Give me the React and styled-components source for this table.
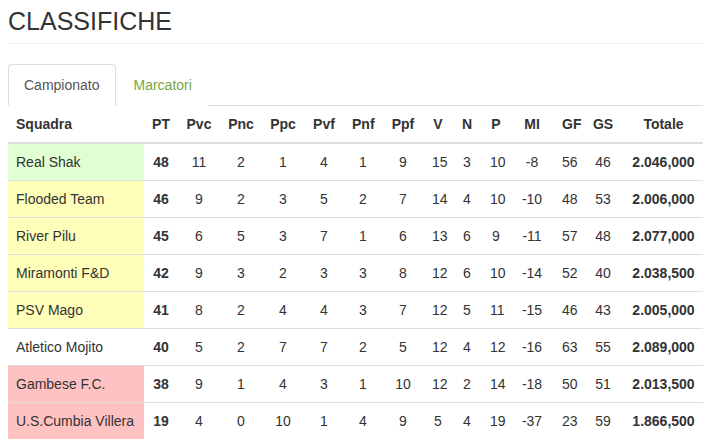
import styled, { createGlobalStyle } from 'styled-components';

const GlobalStyle = createGlobalStyle`
    body {
        margin: 0;
        padding: 0 8px;
        font-family: "Liberation Sans", Arial, sans-serif;
        font-size: 14px;
        line-height: 1.42857;
        color: #333;
        background: #fff;
    }
`;

const Page = styled.div`
    width: 695px;
`;

const Title = styled.h1`
    margin: 0;
    padding-top: 7px;
    font-size: 25px;
    font-weight: 400;
    line-height: 28px;
    color: #333;
    padding-bottom: 8px;
    border-bottom: 1px solid #eee;
`;

const Tabs = styled.ul`
    list-style: none;
    margin: 20px 0 0;
    padding: 0;
    display: flex;
    border-bottom: 1px solid #ddd;
`;

const Tab = styled.li`
    margin-right: 2px;
    margin-bottom: -1px;
    padding: 10px 15px;
    line-height: 20px;
    border: 1px solid ${({ $active }) => ($active ? '#ddd' : 'transparent')};
    border-bottom-color: ${({ $active }) => ($active ? '#fff' : 'transparent')};
    border-radius: 4px 4px 0 0;
    background: #fff;
    color: ${({ $active }) => ($active ? '#555' : '#7aa63e')};
    cursor: pointer;
`;

const Table = styled.table`
    width: 100%;
    border-collapse: collapse;
    border-spacing: 0;
    table-layout: fixed;
`;

const Th = styled.th`
    padding: 8px;
    line-height: 20px;
    font-weight: 700;
    text-align: ${({ $left }) => ($left ? 'left' : 'center')};
    border-bottom: 2px solid #ddd;
    white-space: nowrap;
`;

const Td = styled.td`
    padding: 8px;
    line-height: 20px;
    text-align: ${({ $left }) => ($left ? 'left' : 'center')};
    font-weight: ${({ $bold }) => ($bold ? 700 : 400)};
    border-top: ${({ $first }) => ($first ? 'none' : '1px solid #ddd')};
    background: ${({ $bg }) => $bg || 'transparent'};
    white-space: nowrap;
    overflow: visible;
`;

const ZONE = {
    green: '#e0ffd2',
    yellow: '#ffffb9',
    red: '#ffc2c2',
};

const cols = [
    ['Squadra', 136],
    ['PT', 34],
    ['Pvc', 42],
    ['Pnc', 42],
    ['Ppc', 42],
    ['Pvf', 40],
    ['Pnf', 38],
    ['Ppf', 42],
    ['V', 28],
    ['N', 30],
    ['P', 28],
    ['MI', 44],
    ['GF', 28],
    ['GS', 42],
    ['Totale', 79],
];

const rows = [
    ['Real Shak', 'green', 48, 11, 2, 1, 4, 1, 9, 15, 3, 10, -8, 56, 46, '2.046,000'],
    ['Flooded Team', 'yellow', 46, 9, 2, 3, 5, 2, 7, 14, 4, 10, -10, 48, 53, '2.006,000'],
    ['River Pilu', 'yellow', 45, 6, 5, 3, 7, 1, 6, 13, 6, 9, -11, 57, 48, '2.077,000'],
    ['Miramonti F&D', 'yellow', 42, 9, 3, 2, 3, 3, 8, 12, 6, 10, -14, 52, 40, '2.038,500'],
    ['PSV Mago', 'yellow', 41, 8, 2, 4, 4, 3, 7, 12, 5, 11, -15, 46, 43, '2.005,000'],
    ['Atletico Mojito', null, 40, 5, 2, 7, 7, 2, 5, 12, 4, 12, -16, 63, 55, '2.089,000'],
    ['Gambese F.C.', 'red', 38, 9, 1, 4, 3, 1, 10, 12, 2, 14, -18, 50, 51, '2.013,500'],
    ['U.S.Cumbia Villera', 'red', 19, 4, 0, 10, 1, 4, 9, 5, 4, 19, -37, 23, 59, '1.866,500'],
];

export default function App() {
    return (
        <>
            <GlobalStyle />
            <Page>
                <Title>CLASSIFICHE</Title>
                <Tabs>
                    <Tab $active>Campionato</Tab>
                    <Tab>Marcatori</Tab>
                </Tabs>
                <Table>
                    <colgroup>
                        {cols.map(([name, w]) => (
                            <col key={name} style={{ width: w }} />
                        ))}
                    </colgroup>
                    <thead>
                        <tr>
                            {cols.map(([name], i) => (
                                <Th key={name} $left={i === 0}>
                                    {name}
                                </Th>
                            ))}
                        </tr>
                    </thead>
                    <tbody>
                        {rows.map(([team, zone, ...vals], r) => (
                            <tr key={team}>
                                <Td $left $first={r === 0} $bg={zone && ZONE[zone]}>
                                    {team}
                                </Td>
                                {vals.map((v, i) => (
                                    <Td
                                        key={i}
                                        $first={r === 0}
                                        $bold={i === 0 || i === vals.length - 1}
                                    >
                                        {v}
                                    </Td>
                                ))}
                            </tr>
                        ))}
                    </tbody>
                </Table>
            </Page>
        </>
    );
}
